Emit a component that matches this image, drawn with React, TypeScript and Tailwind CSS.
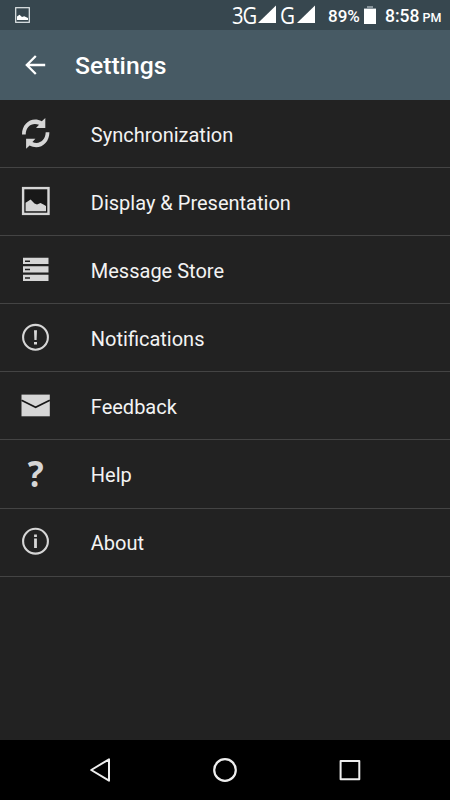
import type { ReactNode } from "react";

const ink = "#d6d6d6";

const items: { label: string; icon: ReactNode }[] = [
  {
    label: "Synchronization",
    icon: (
      <g fill={ink}>
        <path d="M22 34.5C22 23 32 16.2 41.8 21.2L45.3 18V28H36L39 24.8C32.5 22 25.9 26 25.7 34.5Z" />
        <path d="M22 34.5C22 23 32 16.2 41.8 21.2L45.3 18V28H36L39 24.8C32.5 22 25.9 26 25.7 34.5Z" transform="rotate(180 35.7 33.4)" />
      </g>
    ),
  },
  {
    label: "Display & Presentation",
    icon: (
      <>
        <rect x="23.1" y="20.1" width="25.4" height="25.8" fill="#181818" stroke={ink} strokeWidth="2.4" />
        <path d="M25.6 43.2V34.8L28 33.2L30.6 31.6L34.5 35.6L37 36.6L40.5 35L43 36.2L46 38V43.2Z" fill={ink} />
      </>
    ),
  },
  {
    label: "Message Store",
    icon: (
      <>
        <path d="M23 21.8H48.5V28H23ZM23 30.2H48.5V36.4H23ZM23 38.8H48.5V45H23Z" fill={ink} />
        <path d="M25 25.2H30M25 33.4H30M25 42H30" stroke="#202020" strokeWidth="1.5" />
      </>
    ),
  },
  {
    label: "Notifications",
    icon: (
      <>
        <circle cx="35.5" cy="33.3" r="12.4" fill="none" stroke={ink} strokeWidth="2.1" />
        <path d="M34 26.3H37L36.6 36.1H34.4ZM34 38H37V40.6H34Z" fill={ink} />
      </>
    ),
  },
  {
    label: "Feedback",
    icon: (
      <>
        <path d="M21.5 22.6H49.8V44.3H21.5Z" fill={ink} />
        <path d="M21.5 28.3L35.6 35.2L49.8 28.3" fill="none" stroke="#171717" strokeWidth="1.7" />
      </>
    ),
  },
  {
    label: "Help",
    icon: (
      <text x="0" y="46.7" transform="translate(35.8 0) scale(0.93 1)" textAnchor="middle" fill={ink} className="font-['Open_Sans',sans-serif] text-[36px] font-bold">
        ?
      </text>
    ),
  },
  {
    label: "About",
    icon: (
      <>
        <circle cx="35.5" cy="33.2" r="12.4" fill="none" stroke={ink} strokeWidth="2.1" />
        <path d="M34.1 26.4H36.9V28.9H34.1ZM34.1 30.4H36.9V40.1H34.1Z" fill={ink} />
      </>
    ),
  },
];

function StatusBar() {
  return (
    <div className="flex h-[30px] items-center bg-[#37474f] text-white">
      <svg className="ml-[15px] h-[30px] w-4" viewBox="15 0 16 30">
        <rect x="15.7" y="7.7" width="13.6" height="14.6" fill="none" stroke="#e4e9eb" strokeWidth="1.2" />
        <path d="M17 20V16.5L19.5 14.8L22 17L24.2 16.2L28 18V20Z" fill="#fff" />
      </svg>
      <span className="ml-[201px] w-[26px] font-['Open_Sans',sans-serif] text-[23px] leading-[30px] tracking-[-1.3px]">
        <span className="inline-block origin-left scale-x-[0.88]">3G</span>
      </span>
      <svg className="h-[30px] w-[18px]" viewBox="258 0 18 30">
        <path d="M258 23L276 5.5V23Z" fill="#fff" />
      </svg>
      <span className="ml-1 w-[17px] font-['Open_Sans',sans-serif] text-[23px] leading-[30px]">
        <span className="inline-block origin-left scale-x-[0.9]">G</span>
      </span>
      <svg className="h-[30px] w-[18px]" viewBox="297 0 18 30">
        <path d="M297 23L315 5.5V23Z" fill="#fff" />
      </svg>
      <span className="ml-[13px] w-[36px] whitespace-nowrap pt-[2px] text-[17px] font-medium leading-[30px]">89%</span>
      <svg className="h-[30px] w-3" viewBox="364 0 12 30">
        <path d="M367 6H373V8H376V10H364V8H367Z" fill="#87939a" />
        <path d="M364 9H376V24H364Z" fill="#fff" />
      </svg>
      <span className="ml-[9px] whitespace-nowrap pt-[3px] text-[17.5px] font-medium leading-[30px]">
        8:58<span className="ml-[3px] text-[12.5px]">PM</span>
      </span>
    </div>
  );
}

export default function App() {
  return (
    <div className="flex h-[800px] w-[450px] flex-col overflow-hidden bg-[#222222] font-[Roboto,sans-serif]">
      <StatusBar />
      <header className="flex h-[70px] items-center bg-[#475a64] text-white">
        <svg className="ml-[24px] h-[70px] w-[24px]" viewBox="24 30 24 70" fill="none" stroke="#fff" strokeWidth="2.3">
          <path d="M45.2 65H27M35.8 56L26.8 65L35.8 74" />
        </svg>
        <h1 className="ml-[27px] pt-[2px] text-[24.7px] font-medium">Settings</h1>
      </header>
      <main className="flex-1">
        {items.map(({ label, icon }) => (
          <div key={label} className="flex h-[68.1px] items-center border-b border-[#444444]">
            <svg className="ml-[18px] h-[68px] w-[36px] shrink-0" viewBox="18 0 36 68">
              {icon}
            </svg>
            <span className="ml-[36.8px] pt-[2px] text-[20px] text-[#f3f3f3]">{label}</span>
          </div>
        ))}
      </main>
      <nav className="flex h-[60px] bg-black">
        <svg className="h-[60px] w-full" viewBox="0 0 450 60" fill="none" stroke="#eeeeee" strokeWidth="2" strokeLinejoin="round">
          <path d="M91.2 30L109 19.3V40.7Z" />
          <circle cx="225" cy="30" r="10.8" strokeWidth="2.2" />
          <rect x="340.6" y="20.9" width="18.7" height="18.4" />
        </svg>
      </nav>
    </div>
  );
}
